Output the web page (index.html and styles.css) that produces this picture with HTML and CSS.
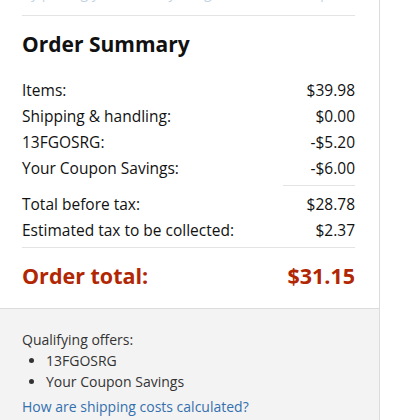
FILE: index.html
```html
<!DOCTYPE html>
<html>
<head>
<meta charset="utf-8">
<link rel="stylesheet" href="styles.css">
</head>
<body>
<div class="card">
  <div class="main">
    <div class="cut"><span>By placing your order, you agree to Amazon's privacy notice and conditions of use.</span></div>
    <div class="divider"></div>
    <h2 class="title">Order Summary</h2>
    <div class="row"><span>Items:</span><span>$39.98</span></div>
    <div class="row"><span>Shipping &amp; handling:</span><span>$0.00</span></div>
    <div class="row"><span>13FGOSRG:</span><span>-$5.20</span></div>
    <div class="row"><span>Your Coupon Savings:</span><span>-$6.00</span></div>
    <div class="short-divider"></div>
    <div class="row"><span>Total before tax:</span><span>$28.78</span></div>
    <div class="row"><span>Estimated tax to be collected:</span><span>$2.37</span></div>
    <div class="divider mid"></div>
    <div class="row total"><span>Order total:</span><span>$31.15</span></div>
  </div>
  <div class="foot">
    <div class="offers">Qualifying offers:</div>
    <ul class="offer-list">
      <li>13FGOSRG</li>
      <li>Your Coupon Savings</li>
    </ul>
    <a class="link" href="#">How are shipping costs calculated?</a>
  </div>
</div>
</body>
</html>
```

FILE: styles.css
```css
html, body {
  margin: 0;
  padding: 0;
  background: #fff;
}
body {
  font-family: "Open Sans", "Noto Sans", sans-serif;
  font-size: 15.5px;
  color: #111;
  height: 420px;
  overflow: hidden;
}
.card {
  width: 379px;
  border-right: 1px solid #dcdcdc;
}
.main {
  padding: 0 24px 18px 22px;
  border-bottom: 1px solid #dcdcdc;
}
.cut {
  height: 15px;
  overflow: hidden;
}
.cut span {
  display: block;
  margin-top: -17px;
  line-height: 20px;
  font-size: 14px;
  white-space: nowrap;
  color: #c4d3e3;
}
.divider {
  border-top: 1px solid #e3e3e3;
}
.divider.mid {
  margin-top: 4px;
}
.title {
  margin: 14px 0 19px;
  font-size: 21px;
  line-height: 28px;
  font-weight: 700;
  color: #111;
}
.row {
  display: flex;
  justify-content: space-between;
  line-height: 26px;
}
.short-divider {
  width: 72px;
  margin: 4px 0 5px auto;
  border-top: 1px solid #e3e3e3;
}
.row.total {
  margin-top: 14px;
  font-size: 21.5px;
  line-height: 28px;
  font-weight: 700;
  color: #b12704;
}
.foot {
  background: #f3f3f3;
  padding: 20px 24px 20px 22px;
  color: #333;
  font-size: 14px;
  line-height: 21px;
}
.offer-list {
  margin: 0;
  padding: 0 0 0 24px;
}
.link {
  display: block;
  margin-top: 4px;
  color: #3470ae;
  text-decoration: none;
}
```
